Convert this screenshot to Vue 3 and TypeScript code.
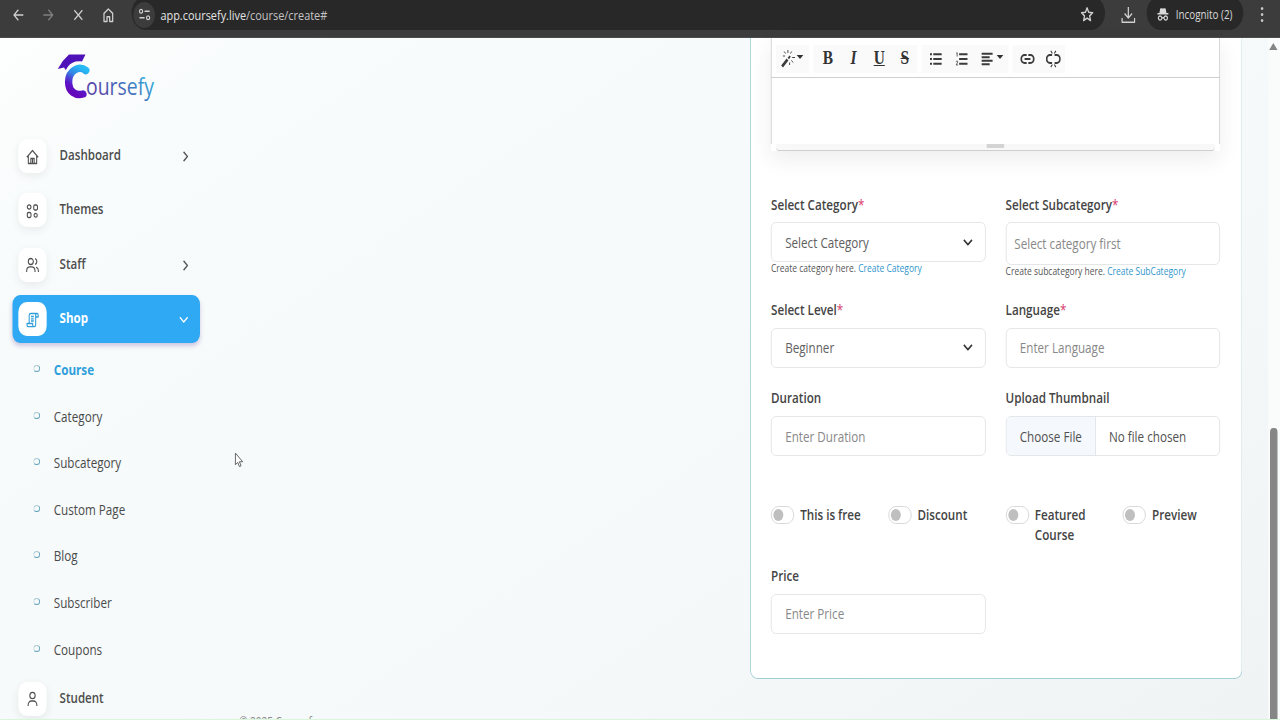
<script setup lang="ts">
interface NavItem {
  label: string
  icon: 'home' | 'grid' | 'users' | 'scroll' | 'user'
  arrow?: 'right' | 'down'
  active?: boolean
}

const topItems: NavItem[] = [
  { label: 'Dashboard', icon: 'home', arrow: 'right' },
  { label: 'Themes', icon: 'grid' },
  { label: 'Staff', icon: 'users', arrow: 'right' },
  { label: 'Shop', icon: 'scroll', arrow: 'down', active: true },
]
const subItems: string[] = ['Course', 'Category', 'Subcategory', 'Custom Page', 'Blog', 'Subscriber', 'Coupons']
const toggles: string[] = ['This is free', 'Discount', 'Featured Course', 'Preview']

const icons: Record<NavItem['icon'], string> = {
  home: 'M1.2 8.2 8 1.5 14.8 8.2M3 7v7.500h10V7M6 14.500V9.500h4v5M8 10v4.500',
  grid: 'M1.8 4a2.200 2.200 0 1 0 4.400 0a2.200 2.200 0 1 0-4.400 0M9.500 3.500a1.500 1.500 0 0 1 1.500-1.500h1.500a1.500 1.500 0 0 1 1.500 1.500v2a1.500 1.500 0 0 1-1.500 1.500H11a1.500 1.500 0 0 1-1.500-1.500zM1.800 11a1.500 1.500 0 0 1 1.500-1.500h1.400A1.500 1.500 0 0 1 6.200 11v2a1.500 1.500 0 0 1-1.500 1.500H3.300A1.500 1.500 0 0 1 1.800 13zM9.900 12.300a1.900 1.900 0 1 0 3.800 0a1.900 1.900 0 1 0-3.800 0',
  users: 'M3 4.500a3 3 0 1 0 6 0a3 3 0 1 0-6 0M1 15v-1.500a4 4 0 0 1 4-3.600h2a4 4 0 0 1 4 3.600V15M11 1.600a3 3 0 0 1 0 5.800M12.300 10.200a4 4 0 0 1 2.800 3.600V15',
  scroll: 'M4 11.500V3.300A2 2 0 0 1 6 1.500h7.500a1.600 1.600 0 0 1 1.300 1.800V5h-3V3.300a1.600 1.600 0 0 1 1.700-1.800M11.800 5v8a1.700 1.700 0 0 1-1.700 1.700H3.200a1.800 1.800 0 0 1-1.800-1.800v-1.400h6.800v1.400a1.800 1.800 0 0 0 1.900 1.800M6.200 4.500h3.400M6.200 6.800h3.400M6.200 9h3.400',
  user: 'M4.800 4.500a3.200 3.200 0 1 0 6.400 0a3.200 3.200 0 1 0-6.400 0M2.800 15v-1.200a3.800 3.800 0 0 1 3.800-3.800h2.800a3.800 3.800 0 0 1 3.800 3.800V15',
}
</script>

<template>
  <div class="viewport">
    <div class="stage">
      <header class="browser">
        <svg class="nav-ico" viewBox="0 0 16 16"><path d="M14 8H3M8 2.8 2.8 8 8 13.2" /></svg>
        <svg class="nav-ico dim" viewBox="0 0 16 16"><path d="M2 8h11M8 2.8 13.2 8 8 13.2" /></svg>
        <svg class="nav-ico" viewBox="0 0 16 16"><path d="m3.2 3.2 9.6 9.6M12.8 3.2l-9.6 9.6" /></svg>
        <svg class="nav-ico" viewBox="0 0 16 16"><path d="M2.8 6.3 8 2l5.2 4.3v8.2h-3.6v-4.8H6.4v4.8H2.8z" /></svg>
        <div class="address">
          <span class="tune">
            <svg viewBox="0 0 16 16"><path d="M1.5 4.5a2 2 0 1 0 4 0a2 2 0 1 0-4 0M8 4.5h6.5M1.5 11.5H8M10.5 11.5a2 2 0 1 0 4 0a2 2 0 1 0-4 0" /></svg>
          </span>
          <span class="url">app.coursefy.live<i>/course/create#</i></span>
          <svg class="star" viewBox="0 0 16 16"><path d="m8 1.8 1.8 4.1 4.5.4-3.4 3 1 4.4L8 11.4l-3.9 2.3 1-4.4-3.4-3 4.5-.4z" /></svg>
        </div>
        <svg class="download" viewBox="0 0 18 18"><path d="M9 1v10.500M4.500 7.500 9 12l4.500-4.500M1.500 12v4.200h15V12" /></svg>
        <div class="incognito">
          <svg viewBox="0 0 16 16">
            <path class="solid" d="M4.5 1.5 6 1.2l2 .5 2-.5 1.5.3 1 5h-9zM1 6.5h14v1.6H1z" />
            <path d="M2.2 11.8a2.2 2.2 0 1 0 4.4 0a2.2 2.2 0 1 0-4.4 0M9.4 11.8a2.2 2.2 0 1 0 4.4 0a2.2 2.2 0 1 0-4.4 0M6.6 11.4h2.8" />
          </svg>
          <span>Incognito (2)</span>
        </div>
        <span class="dots"><b></b><b></b><b></b></span>
      </header>

      <div class="body">
        <aside class="sidebar">
          <svg class="logo" viewBox="0 0 110 60" preserveAspectRatio="none">
            <defs>
              <linearGradient id="mark" x1="0.8" y1="0" x2="0.4" y2="1">
                <stop offset="0" stop-color="#27b9f3" />
                <stop offset="0.35" stop-color="#3487e6" />
                <stop offset="0.75" stop-color="#5a16c8" />
                <stop offset="1" stop-color="#6508bb" />
              </linearGradient>
              <linearGradient id="word" gradientUnits="userSpaceOnUse" x1="60" y1="55" x2="92" y2="22">
                <stop offset="0" stop-color="#554aa9" />
                <stop offset="0.45" stop-color="#4270bd" />
                <stop offset="1" stop-color="#32b6df" />
              </linearGradient>
            </defs>
            <path fill="#4d12b8" d="M19 9.500h16.500l-3.500 7c-6-1.200-11 1-14 5l-2.200 3.500-1.800-2.500-6.200 1.500 5-8z" />
            <path fill="none" stroke="url(#mark)" stroke-width="7.400" stroke-linecap="round" d="M35.800 25.500C29.500 20.500 18.600 25 18.600 37c0 10 7.500 14 14.300 12" />
            <text x="36" y="50" fill="url(#word)" font-size="23.500" textLength="68" lengthAdjust="spacingAndGlyphs">oursefy</text>
          </svg>

          <a v-for="item in topItems" :key="item.label" class="item" :class="{ active: item.active }">
            <span class="box"><svg viewBox="0 0 16 16"><path :d="icons[item.icon]" /></svg></span>
            <span class="name">{{ item.label }}</span>
            <svg v-if="item.arrow" class="arrow" :class="item.arrow" viewBox="0 0 10 10"><path d="M3 .8 7.200 5 3 9.200" /></svg>
          </a>
          <ul class="subs">
            <li v-for="(sub, i) in subItems" :key="sub" :class="{ current: i === 0 }">
              <span class="ring"></span>{{ sub }}
            </li>
          </ul>
          <a class="item">
            <span class="box"><svg viewBox="0 0 16 16"><path :d="icons.user" /></svg></span>
            <span class="name">Student</span>
          </a>
        </aside>

        <main class="main">
          <footer class="copyright">© 2025 Coursefy</footer>
          <section class="card">
            <div class="editor">
              <div class="toolbar">
                <div class="group wand">
                  <svg class="t20" viewBox="0 0 20 20">
                    <path stroke-width="3" d="M2.500 17.500 9 10.500" /><path stroke-width="2" d="m10 9.500 2.200-2.400" />
                    <path stroke-width="1" d="M9.500 1v3M5 2.500l1.700 2M14 2.500l-1.500 2M14.500 8.500h3.500M13.500 11.500l2.500 2M11.500 13.500v2.500M3.500 7h2.500" />
                  </svg><b class="caret"></b>
                </div>
                <div class="group serif">
                  <span class="fb">B</span><span class="fi">I</span><span class="fu">U</span><span class="fs">S</span>
                </div>
                <div class="group lists">
                  <svg class="t16" viewBox="0 0 16 16"><path stroke-width="2.300" d="M0 2.500h2.700M0 8h2.700M0 13.500h2.700M4.500 2.500H16M4.500 8H16M4.500 13.500H16" /></svg>
                  <svg class="t16" viewBox="0 0 16 16"><path stroke-width="2.300" d="M4.500 2.500H16M4.500 8H16M4.500 13.500H16" /><path stroke-width="1" d="M.5 1.500 1.800.8v4.400M.4 11.200c.5-1.800 2.700-1 2.200.3L.5 14.800h2.600" /></svg>
                  <span class="al"><svg class="t16" viewBox="0 0 16 16"><path stroke-width="2.200" d="M0 2h15M0 6h11M0 10h15M0 14h11" /></svg><b class="caret"></b></span>
                </div>
                <div class="group links">
                  <svg class="t18" viewBox="0 0 18 18"><path stroke-width="2" d="M8 5H5.500a4 4 0 0 0 0 8H8M10 5h2.500a4 4 0 0 1 0 8H10M5.500 9h7" /></svg>
                  <svg class="t18" viewBox="0 0 18 18"><path stroke-width="2" d="M7.500 5H5a4 4 0 0 0 0 8h2.500M10.500 5H13a4 4 0 0 1 0 8h-2.500" /><path stroke-width="1.300" d="M7.800 3.500 6 .8M10.200 3.500 12 .8M7.800 14.500 6 17.200M10.200 14.500l1.800 2.700" /></svg>
                </div>
              </div>
              <div class="editing"></div>
              <div class="status"><span></span></div>
            </div>

            <div class="form">
              <div class="field">
                <label>Select Category<em>*</em></label>
                <div class="control select">Select Category<svg viewBox="0 0 12 12"><path d="m1.500 3.500 4.500 4.500 4.500-4.500" /></svg></div>
                <small>Create category here. <a>Create Category</a></small>
              </div>
              <div class="field">
                <label>Select Subcategory<em>*</em></label>
                <div class="control tall ph">Select category first</div>
                <small>Create subcategory here. <a>Create SubCategory</a></small>
              </div>
              <div class="field">
                <label>Select Level<em>*</em></label>
                <div class="control select">Beginner<svg viewBox="0 0 12 12"><path d="m1.500 3.500 4.500 4.500 4.500-4.500" /></svg></div>
              </div>
              <div class="field">
                <label>Language<em>*</em></label>
                <div class="control ph">Enter Language</div>
              </div>
              <div class="field">
                <label>Duration</label>
                <div class="control ph">Enter Duration</div>
              </div>
              <div class="field">
                <label>Upload Thumbnail</label>
                <div class="control file"><span class="choose">Choose File</span><span>No file chosen</span></div>
              </div>
              <div class="toggles">
                <div v-for="t in toggles" :key="t" class="toggle"><span class="switch"></span><span>{{ t }}</span></div>
              </div>
              <div class="field">
                <label>Price</label>
                <div class="control ph">Enter Price</div>
              </div>
            </div>
          </section>
        </main>
        <div class="scroll">
          <span class="up"></span>
          <span class="thumb"></span>
        </div>
      </div>
      <svg class="pointer" viewBox="0 0 12 18" preserveAspectRatio="none"><path d="M1.500 1.200v12.300l2.800-2.500 2 4.500 2-.9-2-4.300h3.900z" /></svg>
    </div>
  </div>
</template>

<style>
body {
  margin: 0;
  overflow: hidden;
}
</style>

<style scoped>
* {
  box-sizing: border-box;
}
.viewport {
  width: 1280px;
  height: 720px;
  overflow: hidden;
}
.stage {
  position: relative;
  width: 1536px;
  height: 720px;
  overflow: hidden;
  transform: scaleX(0.833333);
  transform-origin: 0 0;
  display: flex;
  flex-direction: column;
  font-family: 'Open Sans', 'Noto Sans', sans-serif;
  font-size: 14px;
  color: #444;
}
svg {
  fill: none;
  flex: none;
}
svg path {
  stroke-linejoin: round;
}
.browser {
  height: 38px;
  flex: none;
  background: #3c3c3c;
  border-bottom: 1px solid #4b4b4b;
  display: flex;
  align-items: center;
  padding: 0 0 8px 14px;
  color: #d8d8d8;
}
.browser svg {
  stroke: #d0d0d0;
  stroke-width: 1.5;
}
.nav-ico {
  width: 16px;
  height: 16px;
  margin-right: 20px;
}
.browser .dim {
  stroke: #808080;
}
.address {
  width: 1168px;
  height: 34px;
  margin-top: -4px;
  border-radius: 17px;
  background: #282828;
  display: flex;
  align-items: center;
  padding: 4px 13px 0 2px;
}
.tune {
  width: 26px;
  height: 26px;
  border-radius: 50%;
  background: #3c3c3c;
  display: flex;
  align-items: center;
  justify-content: center;
}
.tune svg {
  width: 15px;
  height: 15px;
}
.url {
  flex: 1;
  margin-left: 6.500px;
  font-size: 13.100px;
  color: #e4e4e4;
}
.url i {
  font-style: normal;
  color: #c4c4c4;
}
.star {
  width: 17px;
  height: 17px;
}
.download {
  width: 18px;
  height: 18px;
  margin-left: 19px;
}
.incognito {
  width: 116px;
  height: 34px;
  margin: -4px 0 0 13px;
  border-radius: 17px;
  background: #282828;
  padding: 3px 0 0 12px;
  display: flex;
  align-items: center;
  gap: 8px;
  font-size: 11.800px;
  white-space: nowrap;
}
.incognito svg {
  width: 15px;
  height: 15px;
}
.solid {
  fill: #d8d8d8;
  stroke: none;
}
.dots {
  width: 3px;
  margin-left: 20.500px;
  display: flex;
  flex-direction: column;
  gap: 3px;
}
.dots b {
  width: 3px;
  height: 3px;
  border-radius: 50%;
  background: #c8c8c8;
}
.body {
  flex: 1;
  min-height: 0;
  display: flex;
  background: linear-gradient(150deg, #fdfefe 0, #f7fbfb 20%, #f6f9f9 65%, #eff3f3 100%);
  border-bottom: 1px solid #d9f6da;
}
.sidebar {
  width: 254px;
  flex: none;
  padding-left: 15px;
  overflow: hidden;
}
.logo {
  display: block;
  overflow: visible;
  width: 132px;
  height: 60px;
  margin: 7px 0 27px 45px;
}
.item {
  width: 225px;
  height: 48px;
  margin-bottom: 6.400px;
  border-radius: 9px;
  display: flex;
  align-items: center;
  padding: 0 12.500px 0 7px;
}
.box {
  width: 34px;
  height: 34px;
  border-radius: 10px;
  background: #fff;
  box-shadow: 0 3px 10px rgba(0, 0, 0, 0.07);
  display: flex;
  align-items: center;
  justify-content: center;
}
.box svg {
  width: 16px;
  height: 16px;
  margin-top: 1px;
  stroke: #505050;
  stroke-width: 1.300;
}
.name {
  flex: 1;
  margin: -3px 0 0 15.500px;
  font-weight: 600;
  font-size: 13.900px;
  color: #4c4c4c;
}
.arrow {
  width: 11px;
  height: 11px;
  margin-top: 1px;
  stroke: #555;
  stroke-width: 1.400;
}
.arrow.down {
  transform: rotate(90deg);
  margin: 0 1.500px 0 0;
}
.item.active {
  background: #2fa9f3;
  margin-bottom: 3px;
  box-shadow: 0 3px 5px rgba(110, 80, 170, 0.3);
}
.active .name {
  font-weight: 700;
  color: #fff;
}
.active .arrow {
  stroke: #fff;
}
.active .box {
  box-shadow: none;
}
.active .box svg {
  stroke: #329fd8;
}
.subs {
  list-style: none;
  margin: 0 0 2.500px;
  padding: 0 0 0 24.500px;
}
.subs li {
  height: 46.600px;
  display: flex;
  align-items: center;
  color: #4a4a4a;
}
.subs .current {
  color: #2f9fdc;
  font-weight: 700;
}
.ring {
  width: 8px;
  height: 7px;
  margin: -2px 17px 0 0;
  border: 1.200px solid #a9c9d2;
  border-right-color: #5d9fbb;
  border-bottom-color: #5d9fbb;
  border-radius: 50%;
}
.main {
  flex: 1;
  display: flex;
  justify-content: space-between;
  align-items: flex-start;
  padding: 0 31px 0 33px;
}
.copyright {
  align-self: flex-end;
  height: 3px;
  overflow: hidden;
  font-size: 12px;
  line-height: 12px;
  color: #888;
}
.card {
  width: 591px;
  height: 641px;
  background: #fff;
  border: 1.200px solid #a5ced6;
  border-top: 0;
  border-radius: 0 0 9px 9px;
  padding: 0 25.400px 0 24.600px;
}
.editor {
  height: 113px;
  box-shadow: 0 8px 22px rgba(60, 60, 80, 0.09);
}
.toolbar {
  height: 40px;
  border: 1px solid #cfcfcf;
  border-top: 0;
  display: flex;
  align-items: center;
  padding: 2px 0 0 5px;
  gap: 5px;
}
.toolbar svg {
  stroke: #3b3b3b;
}
.group {
  height: 28px;
  background: #fafafb;
  display: flex;
  align-items: center;
}
.wand {
  width: 40px;
  padding-left: 5px;
}
.t20 {
  width: 20px;
  height: 20px;
}
.t16 {
  width: 16px;
  height: 14px;
}
.t18 {
  width: 18px;
  height: 18px;
}
.caret {
  border: 4px solid transparent;
  border-top: 4px solid #333;
  border-bottom: 0;
  margin: -3px 0 0 0;
}
.serif {
  width: 125px;
  padding-left: 2px;
  font-family: 'Liberation Serif', serif;
  font-size: 18.500px;
  font-weight: 700;
  color: #333;
}
.serif span {
  width: 31px;
  text-align: center;
}
.fi {
  font-style: italic;
}
.fu {
  text-decoration: underline;
  text-decoration-thickness: 1px;
}
.fs {
  text-decoration: line-through;
}
.lists {
  width: 104px;
  padding-left: 9px;
  gap: 15px;
}
.al {
  display: flex;
  align-items: center;
}
.al .caret {
  margin-left: 3px;
}
.links {
  width: 63px;
  padding-left: 8.500px;
  gap: 13px;
}
.editing {
  height: 66px;
  border: solid #cfcfcf;
  border-width: 0 1px;
  background: #fff;
}
.status {
  height: 7px;
  margin: 0 6px;
  background: #f8f8f8;
  border-bottom: 1px solid #cfcfcf;
  border-radius: 0 0 4px 4px;
  display: flex;
  justify-content: center;
}
.status span {
  width: 21px;
  height: 4px;
  background: #d4d4d4;
}
.form {
  margin-top: 43.500px;
  display: grid;
  grid-template-columns: 1fr 1fr;
  grid-template-rows: 105.700px 88.300px 116.500px 61px 80px;
  column-gap: 24px;
}
.field label {
  display: block;
  height: 20px;
  line-height: 20px;
  margin-bottom: 7.700px;
  font-weight: 600;
  color: #444;
}
em {
  font-style: normal;
  font-weight: 400;
  color: #d83c6c;
}
.control {
  height: 40px;
  border: 1px solid #e2e4e5;
  border-radius: 6px;
  background: #fff;
  padding: 0 14px 0 16px;
  display: flex;
  align-items: center;
  color: #606060;
}
.select {
  justify-content: space-between;
}
.select svg {
  width: 13px;
  height: 13px;
  stroke: #333;
  stroke-width: 1.700;
}
.ph {
  color: #888;
}
.tall {
  height: 43px;
  padding-left: 9.500px;
}
.field small {
  display: block;
  font-size: 10.200px;
  line-height: 13px;
  color: #555;
}
.field small a {
  color: #2f96cb;
}
.file {
  padding: 0;
  overflow: hidden;
  color: #505050;
}
.choose {
  height: 100%;
  width: 107px;
  padding-left: 16px;
  margin-right: 16px;
  display: flex;
  align-items: center;
  background: #f5f8fc;
  border-right: 1px solid #e2e4e5;
}
.toggles {
  grid-column: 1 / -1;
  display: grid;
  grid-template-columns: repeat(4, 1fr);
  column-gap: 24px;
}
.toggle {
  display: flex;
  align-items: flex-start;
  gap: 7px;
  line-height: 20px;
  font-weight: 600;
  color: #444;
}
.switch {
  flex: none;
  width: 28px;
  height: 18px;
  margin-top: 1px;
  border: 1px solid #d5d5d5;
  border-radius: 9px;
  display: flex;
  align-items: center;
  padding-left: 2px;
}
.switch::before {
  content: '';
  width: 12px;
  height: 12px;
  border-radius: 50%;
  background: #bfbfbf;
}
.scroll {
  width: 14.400px;
  flex: none;
  background: #fafcfc;
  display: flex;
  flex-direction: column;
  align-items: center;
  padding-right: 1px;
}
.up {
  border: 5px solid transparent;
  border-bottom: 7px solid #858585;
  border-top: 0;
  margin-top: 5px;
}
.thumb {
  width: 8.500px;
  flex: 1;
  margin-top: 378px;
  background: #868686;
  border-radius: 4px 4px 0 0;
}
.pointer {
  position: absolute;
  left: 281px;
  top: 452px;
  width: 12px;
  height: 17px;
  fill: #fff;
  stroke: #555;
  stroke-width: 1;
}
</style>
